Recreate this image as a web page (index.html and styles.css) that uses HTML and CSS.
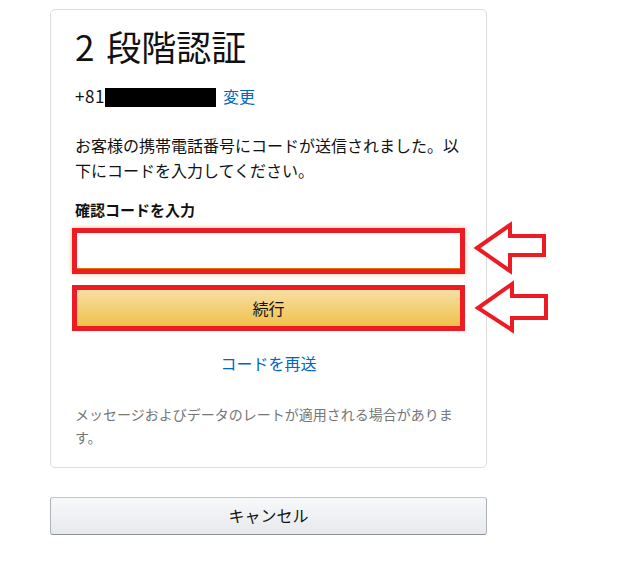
FILE: index.html
```html
<!DOCTYPE html>
<html lang="ja">
<head>
<meta charset="utf-8">
<title>2 段階認証</title>
<link rel="stylesheet" href="styles.css">
</head>
<body>
<div class="page">
  <div class="card">
    <h1 class="title">2 段階認証</h1>
    <div class="phone"><span class="cc">+81</span><span class="redact"></span><a class="link change" href="#">変更</a></div>
    <p class="msg">お客様の携帯電話番号にコードが送信されました。以下にコードを入力してください。</p>
    <label class="label">確認コードを入力</label>
    <div class="mark field"><div class="input"></div></div>
    <div class="mark btn"><span class="btn-text">続行</span></div>
    <div class="resend"><a class="link" href="#">コードを再送</a></div>
    <p class="note">メッセージおよびデータのレートが適用される場合があります。</p>
  </div>
  <div class="cancel">キャンセル</div>
  <svg class="arrows" width="636" height="567" viewBox="0 0 636 567">
    <polygon points="477,248 510,225 510,236 544,236 544,255 510,255 510,271" />
    <polygon points="478,308 512,284 512,296 546,296 546,318 512,318 512,330" />
  </svg>
</div>
</body>
</html>
```

FILE: styles.css
```css
html, body {
  margin: 0;
  padding: 0;
  background: #fff;
}
body {
  font-family: "Noto Sans CJK JP", "Noto Sans", sans-serif;
  color: #111;
}
.page {
  position: relative;
  width: 636px;
  height: 567px;
  padding: 9px 0 0 50px;
  box-sizing: border-box;
}
.card {
  width: 437px;
  box-sizing: border-box;
  border: 1px solid #ddd;
  border-radius: 5px;
  padding: 15px 24px 18px 24px;
}
.title {
  margin: 0;
  font-size: 35px;
  font-weight: 400;
  line-height: 42px;
  word-spacing: 4px;
  color: #111;
}
.phone {
  margin-top: 17px;
  height: 24px;
  font-size: 16px;
  line-height: 24px;
  white-space: nowrap;
}
.cc {
  display: inline-block;
  width: 30px;
  font-size: 17px;
  letter-spacing: 0.6px;
  color: #111;
}
.redact {
  display: inline-block;
  width: 111px;
  height: 19px;
  margin-top: 4px;
  vertical-align: top;
  background: #000;
}
.link {
  color: #0066c0;
  text-decoration: none;
}
.change {
  margin-left: 7px;
}
.msg {
  margin: 25px 0 0 0;
  font-size: 16px;
  line-height: 25px;
}
.label {
  display: block;
  margin-top: 15px;
  font-size: 15px;
  font-weight: 700;
  line-height: 24px;
}
.mark {
  margin: 0 -3px;
  border: 5px solid #ed1c24;
  height: 46px;
  box-sizing: border-box;
}
.field {
  margin-top: 6px;
  box-shadow: 0 0 5px rgba(228, 121, 17, 0.45);
}
.input {
  height: 36px;
  background: #fff;
  box-sizing: border-box;
  border-bottom: 1px solid #e77600;
}
.btn {
  margin-top: 11px;
  background: linear-gradient(to bottom, #f7dfa5, #f0c14b);
  text-align: center;
}
.btn-text {
  font-size: 16px;
  line-height: 36px;
  color: #111;
}
.resend {
  margin-top: 20px;
  text-align: center;
  font-size: 16px;
  line-height: 24px;
}
.note {
  margin: 28px 0 0 0;
  font-size: 14px;
  line-height: 23px;
  color: #767676;
}
.cancel {
  margin-top: 29px;
  width: 437px;
  height: 38px;
  box-sizing: border-box;
  border: 1px solid #adb1b8;
  border-top-color: #c0c3c8;
  border-bottom-color: #8d9096;
  border-radius: 3px;
  background: linear-gradient(to bottom, #f7f8fa, #e7e9ec);
  text-align: center;
  font-size: 16px;
  line-height: 35px;
  color: #111;
}
.arrows {
  position: absolute;
  left: 0;
  top: 0;
  pointer-events: none;
}
.arrows polygon {
  fill: #fff;
  stroke: #ed1c24;
  stroke-width: 4;
  stroke-linejoin: miter;
}
```
